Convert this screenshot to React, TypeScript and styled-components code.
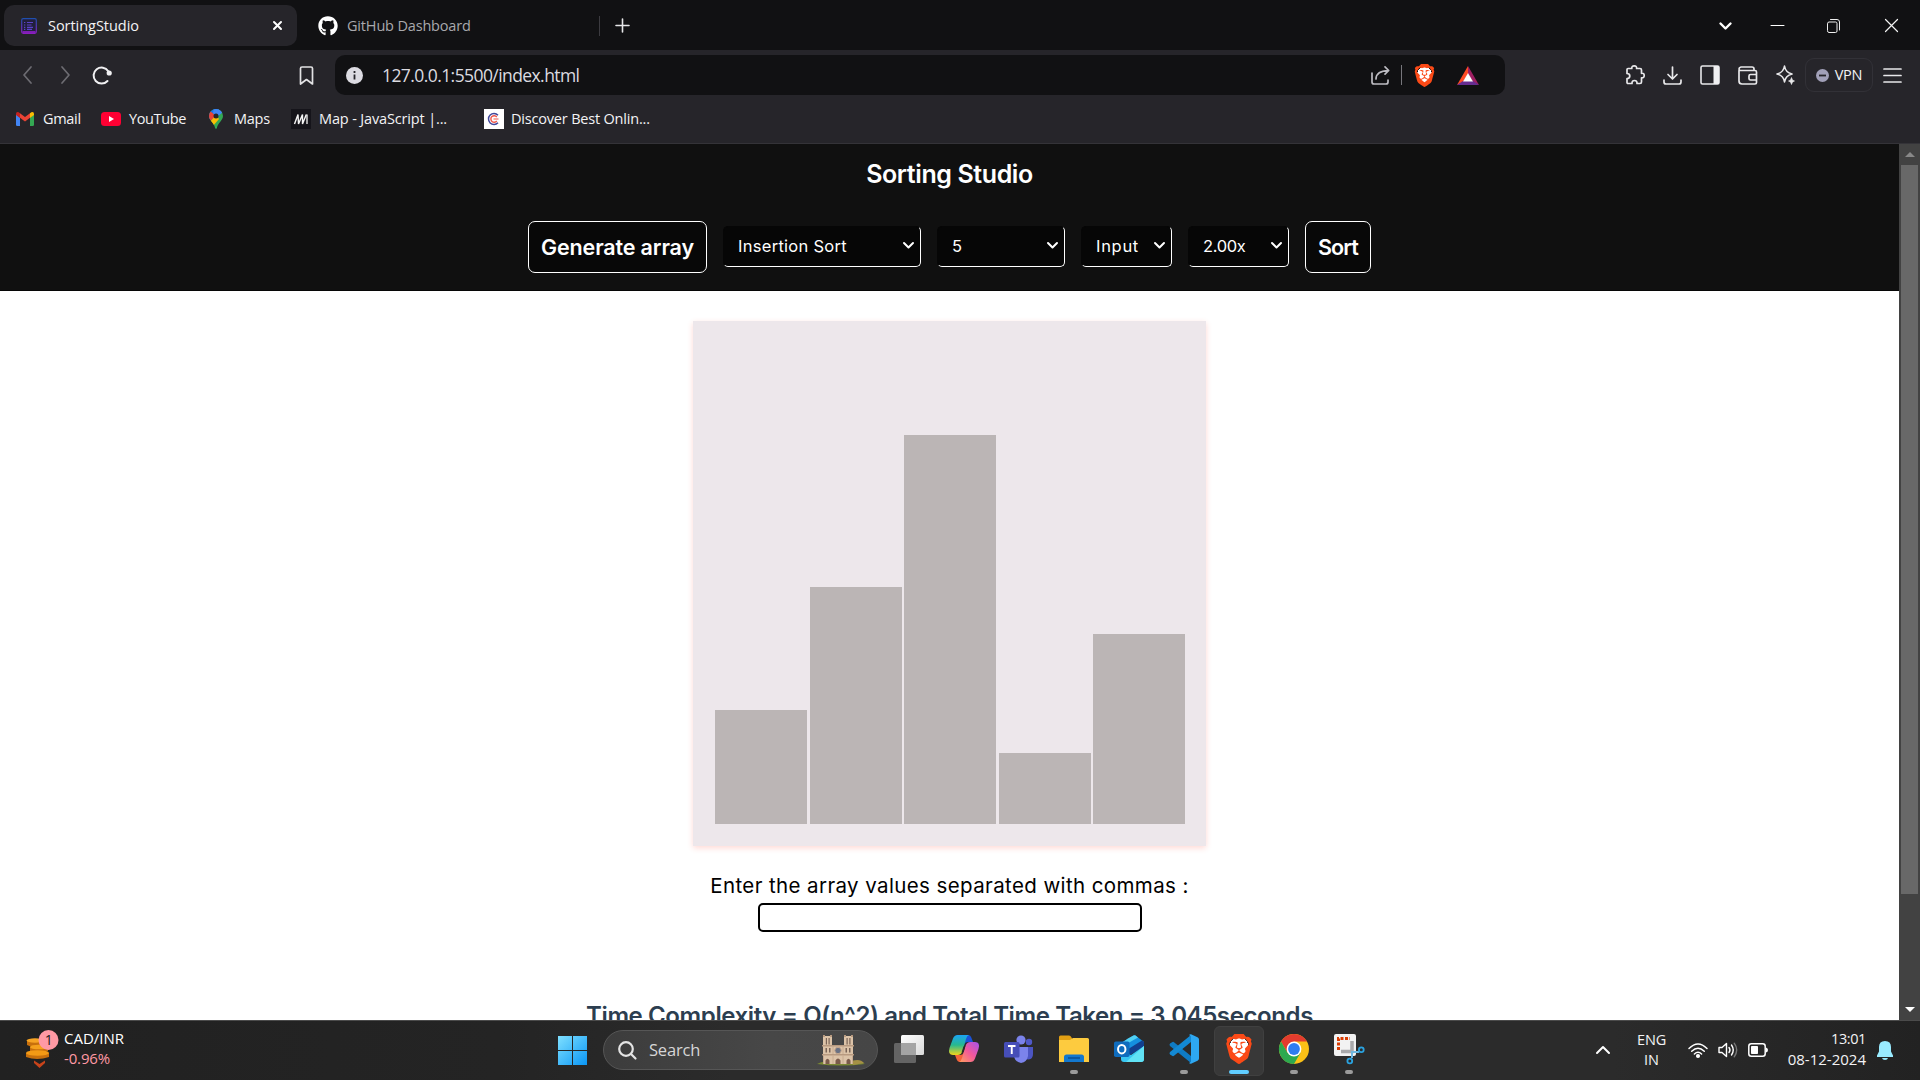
import React from 'react';
import styled, { createGlobalStyle } from 'styled-components';
import { FaGithub } from 'react-icons/fa';
import { SiBrave } from 'react-icons/si';

const Global = createGlobalStyle`
  * { box-sizing: border-box; }
  body { margin: 0; width: 1920px; height: 1080px; overflow: hidden; background: #111113; }
  svg { display: block; flex: none; overflow: visible; }
`;

const UI = `"Open Sans", "Noto Sans", sans-serif`;
const GEO = `Inter, "Open Sans", sans-serif`;

const Screen = styled.div`
  width: 1920px;
  height: 1080px;
  display: flex;
  flex-direction: column;
  font-family: ${UI};
`;

const Label = styled.span<{ $size?: number; $track?: number; $color?: string }>`
  font-size: ${(p) => p.$size ?? 14.5}px;
  letter-spacing: ${(p) => p.$track ?? 0}px;
  color: ${(p) => p.$color ?? '#f3f3f5'};
  line-height: 20px;
  white-space: nowrap;
`;

/* ---------- browser chrome ---------- */
const TabStrip = styled.div`
  height: 50px;
  background: #111113;
  display: flex;
  align-items: center;
  padding: 1px 22px 0 4px;
`;
const Tab = styled.div<{ $active?: boolean }>`
  width: ${(p) => (p.$active ? 293 : 302)}px;
  height: 41px;
  border-radius: 10px;
  background: ${(p) => (p.$active ? '#26252a' : 'transparent')};
  display: flex;
  align-items: center;
  gap: ${(p) => (p.$active ? 11 : 9)}px;
  padding: 0 ${(p) => (p.$active ? 15 : 0)}px 0 ${(p) => (p.$active ? 17 : 21)}px;
`;
const Spacer = styled.div`
  flex: 1;
`;
const Divider = styled.div<{ $color?: string }>`
  width: 1px;
  height: 20px;
  background: ${(p) => p.$color ?? '#3c3b40'};
`;
const NewTab = styled.div`
  margin-left: 16px;
`;
const WindowButtons = styled.div`
  display: grid;
  grid-template-columns: 52px 56px 58px 13px;
  align-items: center;
`;

const Toolbar = styled.div`
  height: 50px;
  background: #26252a;
  display: flex;
  align-items: center;
  padding: 0 18px 0 20px;
`;
const NavGroup = styled.div`
  width: 315px;
  display: flex;
  align-items: center;
  gap: 22px;
  padding-right: 20px;
`;
const AddressBar = styled.div`
  width: 1170px;
  height: 40px;
  border-radius: 10px;
  background: #111113;
  display: flex;
  align-items: center;
  padding: 0 26px 0 11px;
`;
const Url = styled(Label)`
  margin-left: 19px;
`;
const AddressActions = styled.div`
  display: flex;
  align-items: center;
  gap: 11px;
`;
const Bat = styled.div`
  margin-left: 10px;
`;
const BraveShield = styled.div<{ $w: number; $h: number }>`
  width: ${(p) => p.$w}px;
  height: ${(p) => p.$h}px;
  display: grid;
  place-items: center;
  color: #fb4a17;
  background: radial-gradient(ellipse 32% 36% at 50% 46%, #fff 98%, transparent);
`;
const ToolActions = styled.div`
  display: flex;
  align-items: center;
  gap: 18px;
`;
const VpnPill = styled.div`
  width: 68px;
  height: 34px;
  margin: 0 -8px 0 -8px;
  border: 1px solid #323137;
  border-radius: 9px;
  display: flex;
  align-items: center;
  justify-content: center;
  gap: 6px;
`;
const Bookmarks = styled.div`
  height: 44px;
  background: #26252a;
  border-bottom: 1px solid #343338;
  display: flex;
  align-items: center;
  padding: 0 0 6px 16px;
`;
const Bookmark = styled.div<{ $w: number; $gap: number }>`
  width: ${(p) => p.$w}px;
  display: flex;
  align-items: center;
  gap: ${(p) => p.$gap}px;
`;

/* ---------- page ---------- */
const Viewport = styled.div`
  height: 876px;
  display: flex;
  background: #fff;
`;
const Page = styled.main`
  flex: 1;
  height: 876px;
  overflow: hidden;
  display: flex;
  flex-direction: column;
  align-items: center;
  font-family: ${GEO};
`;
const Header = styled.header`
  width: 100%;
  height: 147px;
  flex: none;
  background: #101010;
  border-bottom: 1px solid #060606;
  display: flex;
  flex-direction: column;
  align-items: center;
  padding-top: 11px;
`;
const Title = styled.h1`
  margin: 0 0 28px;
  font-size: 25px;
  line-height: 38px;
  font-weight: 600;
  letter-spacing: -0.4px;
  color: #fff;
`;
const Controls = styled.div`
  display: flex;
  align-items: center;
  gap: 16px;
`;
const ActionButton = styled.button<{ $w: number; $track: number }>`
  width: ${(p) => p.$w}px;
  height: 52px;
  padding: 0;
  border: 1px solid #fff;
  border-radius: 7px;
  background: #080808;
  color: #fff;
  font: 600 21.5px ${GEO};
  letter-spacing: ${(p) => p.$track}px;
  white-space: nowrap;
`;
const Picker = styled.div<{ $w: number; $track: number }>`
  width: ${(p) => p.$w}px;
  height: 41px;
  margin-bottom: 1px;
  padding: 0 6px 2px 14px;
  border: 1px solid;
  border-color: #060606 #fff #fff #060606;
  border-radius: 5px;
  background: #060606;
  color: #fff;
  display: flex;
  align-items: center;
  justify-content: space-between;
  font-size: 16.5px;
  letter-spacing: ${(p) => p.$track}px;
`;
const Chart = styled.section`
  width: 513px;
  height: 525px;
  flex: none;
  margin-top: 30px;
  padding: 22px 21px 22px 22px;
  background: #ede7eb;
  box-shadow: 0 2px 6px rgba(255, 60, 40, 0.2);
  display: flex;
  align-items: flex-end;
  justify-content: space-between;
`;
const Bar = styled.div`
  width: 92px;
  background: #bbb5b5;
`;
const Prompt = styled.label`
  margin-top: 25px;
  font-size: 20.5px;
  line-height: 30px;
  letter-spacing: 0.39px;
  color: #000;
`;
const ArrayInput = styled.input`
  width: 384px;
  height: 29px;
  flex: none;
  margin-top: 2px;
  border: 2px solid #000;
  border-radius: 5px;
  outline: none;
  background: #fff;
`;
const Result = styled.h2`
  margin: 66px 0 0;
  font-size: 24px;
  line-height: 36px;
  font-weight: 600;
  letter-spacing: -0.39px;
  white-space: nowrap;
  color: #2c3e50;
`;
const ScrollTrack = styled.div`
  width: 21px;
  background: #424242;
  display: flex;
  flex-direction: column;
  align-items: center;
`;
const ScrollArrow = styled.div`
  width: 21px;
  height: 21px;
  display: grid;
  place-items: center;
`;
const ScrollThumb = styled.div`
  width: 17px;
  height: 729px;
  background: #686868;
`;

/* ---------- taskbar ---------- */
const Taskbar = styled.footer`
  height: 60px;
  border-top: 1px solid #4b4b4b;
  background: linear-gradient(90deg, #212121, #242424 26%, #2b2b2b 38%, #2b2b2b 84%, #222 100%);
  display: flex;
  align-items: center;
`;
const Widget = styled.div`
  width: 545px;
  display: flex;
  align-items: center;
  gap: 5px;
  padding: 0 0 3px 26px;
`;
const Stack = styled.div<{ $align: string }>`
  display: flex;
  flex-direction: column;
  align-items: ${(p) => p.$align};
  padding-bottom: 2px;
`;
const StartButton = styled.div`
  width: 58px;
  padding-left: 13px;
`;
const SearchBox = styled.div`
  width: 275px;
  height: 40px;
  margin: 0 3.5px 1px 0;
  border: 1px solid #565656;
  border-radius: 20px;
  background: linear-gradient(90deg, #3c3c3c, #474747 60%, #464646);
  display: flex;
  align-items: center;
  gap: 12px;
  padding: 0 12px 0 14px;
`;
const AppCell = styled.div<{ $active?: boolean }>`
  width: 50px;
  height: 50px;
  margin: 0 2.5px;
  border: 1px solid ${(p) => (p.$active ? '#404040' : 'transparent')};
  border-radius: 6px;
  background: ${(p) => (p.$active ? '#383838' : 'transparent')};
  display: grid;
  grid-template-rows: 1fr 5px;
  justify-items: center;
  align-items: center;
`;
const AppArt = styled.div`
  height: 30px;
  display: grid;
  place-items: center;
  padding-top: 1px;
`;
const Indicator = styled.div<{ $kind: 'none' | 'open' | 'active' }>`
  width: ${(p) => (p.$kind === 'active' ? 20 : 8)}px;
  height: 4px;
  border-radius: 2px;
  background: ${(p) => ({ none: 'transparent', open: '#9b9b9b', active: '#60cdff' })[p.$kind]};
`;
const Tray = styled.div`
  margin-left: auto;
  padding: 0 27px 1px 0;
  display: flex;
  align-items: center;
`;
const Language = styled(Stack)`
  margin: 0 22px 0 27px;
  padding-bottom: 0;
`;
const Status = styled.div`
  display: flex;
  gap: 10px;
  align-items: center;
`;
const Clock = styled(Stack)`
  width: 98px;
  margin-right: 11px;
`;

const Line = ({ w, h, vb, d, color = '#e8e8ea', sw = 1.7 }: { w: number; h: number; vb?: string; d: string; color?: string; sw?: number }) => (
  <svg width={w} height={h} viewBox={vb ?? `0 0 ${w} ${h}`} fill="none" stroke={color} strokeWidth={sw} strokeLinecap="round" strokeLinejoin="round">
    <path d={d} />
  </svg>
);

const Lion = ({ w, h }: { w: number; h: number }) => (
  <BraveShield $w={w} $h={h}>
    <SiBrave size={h} />
  </BraveShield>
);

const PageFavicon = () => (
  <svg width="16" height="16" viewBox="0 0 16 16">
    <defs>
      <linearGradient id="fav" x1="0" y1="0" x2="0" y2="1">
        <stop offset="0" stopColor="#1f4fae" />
        <stop offset="1" stopColor="#8a1fc0" />
      </linearGradient>
    </defs>
    <rect x=".7" y=".7" width="14.6" height="14.6" rx="1.5" fill="#211f3c" stroke="url(#fav)" strokeWidth="1.2" />
    <path d="M1.500 14h13" stroke="#8a1fc0" strokeWidth="1.800" />
    <path d="M3 4.500h1.300M6 4.500h6M3 7h1.300M6 7h4.500M3 9.300h1.300M6 9.300h6M3 11.400h1.300M6 11.400h5" stroke="#5b43c8" strokeWidth="1.200" />
  </svg>
);

const Gmail = () => (
  <svg width="18" height="14" viewBox="0 0 18 14">
    <path d="M0 2.2V12.7Q0 14 1.3 14H4V5.5z" fill="#4285f4" />
    <path d="M18 2.2V12.7Q18 14 16.700 14H14V5.500z" fill="#34a853" />
    <path d="M4 5.800V1.300L9 5L14 1.300V5.800L9 9.600z" fill="#ea4335" />
    <path d="M0 2Q0 0 1.600 0 2.500 0 4 1.200V5.900L0 3z" fill="#c5221f" />
    <path d="M18 2Q18 0 16.400 0 15.500 0 14 1.200V5.900L18 3z" fill="#fbbc04" />
  </svg>
);

const Youtube = () => (
  <svg width="20" height="14" viewBox="0 0 20 14">
    <rect width="20" height="14" rx="3.5" fill="#ff0033" />
    <path d="M8 4v6l5-3z" fill="#fff" />
  </svg>
);

const MapsPin = () => (
  <svg width="14" height="20" viewBox="0 0 14 20">
    <defs>
      <clipPath id="pin"><path d="M7 0a7 7 0 0 1 7 7c0 4.500-5 6.500-6.200 12.200q-.8 1.200-1.600 0C5 13.500 0 11.500 0 7a7 7 0 0 1 7-7z" /></clipPath>
    </defs>
    <g clipPath="url(#pin)">
      <rect width="14" height="20" fill="#34a853" />
      <path d="M0 12 14-4 V-2H0z" fill="#1a73e8" />
      <path d="M0 1l7 6-7 6z" fill="#ea4335" />
      <path d="M0 14 7 6l3 4-6 7z" fill="#fbbc04" />
      <path d="M5-1h9v4L8 8 4 4z" fill="#4285f4" />
    </g>
    <circle cx="7" cy="7" r="2.5" fill="#26252a" />
  </svg>
);

const Mdn = () => (
  <svg width="20" height="20" viewBox="0 0 20 20">
    <rect width="20" height="20" fill="#15141a" />
    <path d="M3.500 15 7 5.500 7.500 15 11.500 5.500 11.500 15 15.300 5.500" fill="none" stroke="#f5f5f5" strokeWidth="1.400" strokeLinejoin="bevel" />
    <path d="M16 5.500v9.500" stroke="#f5f5f5" strokeWidth="1.300" />
  </svg>
);

const CourseIcon = () => (
  <svg width="20" height="20" viewBox="0 0 20 20" fill="none">
    <rect width="20" height="20" fill="#fff" />
    <path d="M14 6.200A5.500 5.500 0 1 0 14 13.800" stroke="#41479b" strokeWidth="1.500" />
    <path d="M12.800 8A3.300 3.300 0 1 0 12.800 12" stroke="#f0564a" strokeWidth="1.400" />
    <path d="M9.500 10h5" stroke="#f0564a" />
  </svg>
);

const Coins = () => (
  <svg width="33" height="38" viewBox="0 0 33 38">
    <g fill="#c8700c">
      <path d="M1 11v4q7 4 16 0v-4z" />
      <path d="M4 17v4q8 4 18 0v-4z" />
      <path d="M0 23v4q11 4 23 0v-4z" />
    </g>
    <ellipse cx="9" cy="10.500" rx="8.500" ry="2.200" fill="#f7a423" />
    <ellipse cx="13" cy="17" rx="9" ry="2.300" fill="#f5a01c" />
    <ellipse cx="11.500" cy="23" rx="11.500" ry="2.700" fill="#f39a15" />
    <path d="M8 30.500l5.500 3.500L19 30.500v2.500l-5.500 5L8 33z" fill="#c8431a" />
    <circle cx="22.500" cy="10" r="10" fill="#ff99a4" />
    <text x="22.800" y="15" fontSize="14" textAnchor="middle" fill="#1b1b1b" fontFamily="Open Sans">1</text>
  </svg>
);

const WindowsLogo = () => (
  <svg width="29" height="29" viewBox="0 0 29 29">
    <defs>
      <linearGradient id="win" x1="0" y1="0" x2="29" y2="29" gradientUnits="userSpaceOnUse">
        <stop offset="0" stopColor="#7fe0ff" />
        <stop offset="1" stopColor="#0a96f5" />
      </linearGradient>
    </defs>
    <path d="M0 0h14v14H0zM15 0h14v14H15zM0 15h14v14H0zM15 15h14v14H15z" fill="url(#win)" />
  </svg>
);

const Cathedral = () => (
  <svg width="48" height="32" viewBox="0 0 48 32">
    <path d="M0 30Q8 26 24 27 40 25 48 30 24 33 0 30z" fill="#7b8a34" />
    <path d="M35 27q8-3 12 2l-11 2z" fill="#a59045" />
    <path d="M6 2h9v9h12V2h9v28H6z" fill="#dcc3a8" />
    <path d="M6 1h2v2H6zM13 1h2v2h-2zM27 1h2v2h-2zM34 1h2v2h-2zM5 11h32v1.500H5zM5 20h32v1.600H5z" fill="#b89a80" />
    <path d="M8.800 4h1.200v6.500H8.800zM11.500 4h1.200v6.500h-1.200zM29.500 4h1.200v6.500h-1.200zM32.300 4h1.200v6.500h-1.200zM8.500 14h1.500v4.500H8.500zM12 14h1.500v4.500h-1.500zM28.500 14h1.500v4.500h-1.500zM32 14h1.500v4.500h-1.500z" fill="#7a6457" />
    <circle cx="21" cy="16.500" r="3.200" fill="#6a7183" stroke="#c3a68e" />
    <path d="M8.500 30v-3.500q2-3.500 4 0V30zM18.500 30v-3.500q2.500-4 5 0V30zM29.500 30v-3.500q2-3.500 4 0V30z" fill="#7a5a4a" />
    <path d="M16 12v8M26 12v8M6.500 22v8M16 22v8M26 22v8M35.500 22v8" stroke="#c4a58c" strokeWidth=".8" />
  </svg>
);

const TaskView = () => (
  <svg width="30" height="28" viewBox="0 0 30 28">
    <defs>
      <linearGradient id="tv" x1="0" y1="0" x2="1" y2="1"><stop offset="0" stopColor="#fff" /><stop offset="1" stopColor="#d9d9d9" /></linearGradient>
    </defs>
    <rect y="8" width="22" height="20" rx="1.500" fill="#646464" />
    <rect x="7" width="23" height="20" rx="1.500" fill="url(#tv)" />
    <path d="M7 8h15v12H7z" fill="#a4a4a4" />
  </svg>
);

const Copilot = () => (
  <svg width="30" height="27" viewBox="0 0 30 27">
    <defs>
      <linearGradient id="cpa" x1="0" y1="0" x2="0" y2="1"><stop offset="0" stopColor="#1ba4f5" /><stop offset=".5" stopColor="#27b98f" /><stop offset="1" stopColor="#f1d51b" /></linearGradient>
      <linearGradient id="cpb" x1="1" y1="0" x2="0" y2="1"><stop offset="0" stopColor="#a553ee" /><stop offset=".5" stopColor="#f3589a" /><stop offset="1" stopColor="#ffa05c" /></linearGradient>
    </defs>
    <path d="M14 0h5q2.500 0 3.500 3L24 7h-5q-3 0-4 3z" fill="#1b52d8" />
    <path d="M16 27h-5q-2.500 0-3.500-3L6 20h5q3 0 4-3z" fill="#f4623a" />
    <path d="M8.500 0H20q-2 .5-3 4l-3.500 12q-1.200 4-5 4H4q-5.500 0-3.500-7L4 3.500Q5.300 0 8.500 0z" fill="url(#cpa)" />
    <path d="M21.500 27H10q2-.5 3-4l3.500-12q1.200-4 5-4H26q5.500 0 3.500 7L26 23.500Q24.700 27 21.500 27z" fill="url(#cpb)" />
    <path d="M14.500 11.500l2-1-2 6.500-2 .5z" fill="#2a2a2a" />
  </svg>
);

const Teams = () => (
  <svg width="30" height="28" viewBox="0 0 30 28">
    <circle cx="25" cy="7" r="3.200" fill="#5059c9" />
    <path d="M20 12h9v7q0 5-4.500 5.500-4 0-4.500-4z" fill="#4c55c2" />
    <circle cx="17" cy="5" r="4.600" fill="#7b83eb" />
    <path d="M10 12h14v9q-1 6-7 7-6-1-7-7z" fill="#7b83eb" />
    <rect y="7" width="15.500" height="15.500" rx="1.500" fill="#464eb8" />
    <path d="M4 11h7.500M7.750 11v8" stroke="#fff" strokeWidth="1.900" />
  </svg>
);

const Explorer = () => (
  <svg width="30" height="28" viewBox="0 0 30 28">
    <path d="M0 2q0-1.500 1.500-1.500H10q1.500 0 2.500 2L14 5H0z" fill="#e2a013" />
    <path d="M0 5h11l3-2h14.500Q30 3 30 4.500V27H0z" fill="#fdcb3f" />
    <path d="M5 27v-5q0-2.500 2.500-2.500h15Q25 19.500 25 22v5z" fill="#1378cf" />
    <path d="M9 23h12" stroke="#0b4f94" strokeWidth="1.500" />
  </svg>
);

const Outlook = () => (
  <svg width="30" height="27" viewBox="0 0 30 27">
    <path d="M5 9 19.500.5Q20.500 0 21.500.5L30 7v4L15 19 5 14z" fill="#1490df" />
    <path d="M14 3.500 19.500.5Q20.500 0 21.500.5L24 2.400 9 11V7z" fill="#50d0f2" />
    <path d="M28 5.500 30 7v5L14 21l-3-5z" fill="#123f8e" />
    <path d="M7 17l10 3L30 11v13q0 3-3 3H10q-3 0-3-3z" fill="#39c7f3" />
    <path d="M30 11 12 27h15q3 0 3-3z" fill="#61e2f5" />
    <rect y="6.500" width="15.500" height="15.500" rx="1.800" fill="#0f6cbd" />
    <ellipse cx="7.750" cy="14.200" rx="3.700" ry="4.200" fill="none" stroke="#fff" strokeWidth="2" />
  </svg>
);

const Code = () => (
  <svg width="30" height="30" viewBox="0 0 30 30">
    <path d="M1 9.500 3.500 8Q4.300 7.600 5 8.200L22 22v7L1 12q-1-1.300 0-2.500z" fill="#0f7bc4" />
    <path d="M1 20.500 3.500 22q.8.4 1.500-.2L22 8V1L1 18q-1 1.300 0 2.500z" fill="#1389d4" />
    <path d="M22 .3 28.500 3.300Q30 4 30 5.500v19q0 1.500-1.500 2.200L22 29.700q-1 .3-2-.7l2-1.200V2.200L20 1q1-1 2-.7z" fill="#2ea8f2" />
  </svg>
);

const Chrome = () => (
  <svg width="30" height="30" viewBox="-15 -15 30 30">
    <circle r="15" fill="#fbc116" />
    <path d="M-13 -7.500A15 15 0 0 1 13 -7.500H0L-6.500 3.750z" fill="#e33b2e" />
    <path d="M-13 -7.500A15 15 0 0 0 0 15L6.500 3.750-6.500 3.750z" fill="#2da94f" />
    <circle r="7.400" fill="#fff" />
    <circle r="5.900" fill="#2f7df0" />
  </svg>
);

const Snip = () => (
  <svg width="30" height="30" viewBox="0 0 30 30" fill="none">
    <rect width="22" height="22" rx="2" fill="#f2f2f2" />
    <path d="M4.500 16V4.500H16" stroke="#d83b01" strokeWidth="3" strokeDasharray="3 1.500" />
    <path d="M7 17.500H18V7" stroke="#a9a9ab" strokeWidth="3.500" />
    <path d="M18 18.500V24M17 18h8" stroke="#6fb7df" strokeWidth="2" />
    <circle cx="15.800" cy="27" r="2.400" stroke="#2aa3e0" strokeWidth="1.800" />
    <circle cx="27.300" cy="15.800" r="2.400" stroke="#2aa3e0" strokeWidth="1.800" />
  </svg>
);

const Chevron = () => <Line w={11} h={7} d="M1 1l4.500 4.500L10 1" color="#fff" sw={2} />;

const bookmarks = [
  { icon: <Gmail />, text: 'Gmail', w: 85, gap: 9, track: -0.3 },
  { icon: <Youtube />, text: 'YouTube', w: 108, gap: 8, track: -0.38 },
  { icon: <MapsPin />, text: 'Maps', w: 82, gap: 11, track: -0.25 },
  { icon: <Mdn />, text: 'Map - JavaScript |...', w: 193, gap: 8, track: -0.15 },
  { icon: <CourseIcon />, text: 'Discover Best Onlin...', w: 170, gap: 7, track: -0.19 },
];

const pickers = [
  { text: 'Insertion Sort', w: 198, track: 0.28 },
  { text: '5', w: 128, track: 0 },
  { text: 'Input', w: 91, track: 0.7 },
  { text: '2.00x', w: 101, track: -0.35 },
];

const values = [24, 50, 82, 15, 40];
const UNIT = 4.745;

const apps: { art: React.ReactNode; state: 'none' | 'open' | 'active' }[] = [
  { art: <TaskView />, state: 'none' },
  { art: <Copilot />, state: 'none' },
  { art: <Teams />, state: 'none' },
  { art: <Explorer />, state: 'open' },
  { art: <Outlook />, state: 'none' },
  { art: <Code />, state: 'open' },
  { art: <Lion w={30} h={30} />, state: 'active' },
  { art: <Chrome />, state: 'open' },
  { art: <Snip />, state: 'open' },
];

export default function App() {
  return (
    <Screen>
      <Global />
      <TabStrip>
        <Tab $active>
          <PageFavicon />
          <Label $track={-0.04}>SortingStudio</Label>
          <Spacer />
          <Line w={9} h={9} d="M1 1l7 7M8 1l-7 7" color="#fff" sw={2} />
        </Tab>
        <Tab>
          <FaGithub size={20} color="#fff" />
          <Label $track={-0.17} $color="#a9a9ad">GitHub Dashboard</Label>
        </Tab>
        <Divider />
        <NewTab>
          <Line w={13} h={13} d="M6.500 0v13M0 6.500h13" color="#e6e6e8" sw={1.6} />
        </NewTab>
        <Spacer />
        <WindowButtons>
          <Line w={13} h={8} d="M1.500 1.500l5 5 5-5" color="#fff" sw={2.4} />
          <Line w={13} h={2} d="M0 .5h13" color="#fff" sw={1} />
          <Line w={13} h={14} d="M.5 4.500q0-1.500 1.500-1.500h6.500q1.500 0 1.500 1.500v7.500q0 1.500-1.500 1.500H2q-1.500 0-1.500-1.500zM3.500 .5H10q2.500 0 2.500 2.500v8" color="#f0f0f0" sw={1} />
          <Line w={13} h={13} d="M.5.5l12 12M12.500.5l-12 12" color="#f4f4f4" sw={1.2} />
        </WindowButtons>
      </TabStrip>

      <Toolbar>
        <NavGroup>
          <Line w={14} h={18} d="M11 1L4 9l7 8" color="#6d6c72" />
          <Line w={14} h={18} d="M6 1l7 8-7 8" color="#6d6c72" />
          <svg width="20" height="19" viewBox="0 0 20 19">
            <path d="M15.500 15A8 8 0 1 1 16.300 5.200" fill="none" stroke="#f0f0f2" strokeWidth="2" strokeLinecap="round" />
            <circle cx="17.200" cy="7" r="2.600" fill="#f0f0f2" />
          </svg>
          <Spacer />
          <Line w={16} h={19} d="M1.500 2.500q0-1.500 1.500-1.500h9q1.500 0 1.500 1.500V18l-6-4.500-6 4.500z" color="#e2e2e4" />
        </NavGroup>
        <AddressBar>
          <svg width="17" height="17" viewBox="0 0 17 17">
            <circle cx="8.500" cy="8.500" r="8.500" fill="#dcdbe2" />
            <path d="M8.500 7.500v5M8.500 4v2" stroke="#26252a" strokeWidth="1.800" />
          </svg>
          <Url $size={17.5} $track={-0.58} $color="#dcdbe0">127.0.0.1:5500/index.html</Url>
          <Spacer />
          <AddressActions>
            <Line w={19} h={19} d="M1 7v9q0 2 2 2h12q2 0 2-2v-2M5 13q0-8 12.500-8.500M14 .800l3.700 3.700L14 8.200" color="#bdbcc2" />
            <Divider $color="#77767c" />
            <Lion w={23} h={23} />
            <Bat>
              <svg width="22" height="19" viewBox="0 0 22 19">
                <path d="M11 0v8l-5 8-6 3z" fill="#ff4a24" />
                <path d="M11 0l11 19-6-3-5-8z" fill="#9e1f63" />
                <path d="M0 19l6-4h10l6 4z" fill="#662d91" />
                <path d="M11 7l5 8.500H6z" fill="#fff" />
              </svg>
            </Bat>
          </AddressActions>
        </AddressBar>
        <Spacer />
        <ToolActions>
          <Line w={20} h={20} d="M2 4.500q0-1 1-1h3.800q-.3-2.700 2.400-2.700t2.400 2.700H15q1.500 0 1.500 1.500v3.300q2.700-.3 2.700 2.200t-2.700 2.300V17q0 1.500-1.500 1.500h-3q.2-3-2.500-3T7 18.500H3q-1 0-1-1v-4q2.800 0 2.800-2.500T2 8.500z" />
          <Line w={19} h={19} d="M9.500 1v11.500M5 8.500l4.500 4.500L14 8.500M1 14v2q0 2 2 2h13q2 0 2-2v-2" />
          <svg width="20" height="20" viewBox="0 0 20 20">
            <rect x="1" y="1" width="18" height="18" rx="1.500" fill="none" stroke="#e8e8ea" strokeWidth="1.600" />
            <path d="M13.500 1H19v18h-5.500z" fill="#f0f0f2" />
          </svg>
          <Line w={20} h={19} d="M1 4.500V15q0 3 3 3h13q1.500 0 1.500-1.500V6q0-1.500-1.500-1.500H2.500Q1 4.500 1 3t2-2h11q2 0 2 2v1.500M18.500 8.500h-6q-1.500 0-1.500 1.500v2.500q0 1.500 1.500 1.500h6" />
          <svg width="19" height="20" viewBox="0 0 19 20" fill="none" stroke="#e8e8ea" strokeWidth="1.600" strokeLinejoin="round">
            <path d="M8.500 1q1 6.500 7.500 8-6.500 1.500-7.500 8Q7.500 10.500 1 9 7.500 7.500 8.500 1z" />
            <path d="M15.500 12.500q.4 3 3 3.500-2.600.5-3 3.500-.4-3-3-3.500 2.600-.5 3-3.500z" fill="#e8e8ea" strokeWidth=".6" />
          </svg>
          <VpnPill>
            <svg width="13" height="13" viewBox="0 0 13 13">
              <circle cx="6.500" cy="6.500" r="6.500" fill="#a1a0b8" />
              <path d="M3 6.500h7" stroke="#26252a" strokeWidth="1.800" />
            </svg>
            <Label $track={-0.2}>VPN</Label>
          </VpnPill>
          <Line w={19} h={15} d="M1 1h17M1 7.500h17M1 14h17" />
        </ToolActions>
      </Toolbar>
      <Bookmarks>
        {bookmarks.map((b) => (
          <Bookmark key={b.text} $w={b.w} $gap={b.gap}>
            {b.icon}
            <Label $track={b.track}>{b.text}</Label>
          </Bookmark>
        ))}
      </Bookmarks>

      <Viewport>
        <Page>
          <Header>
            <Title>Sorting Studio</Title>
            <Controls>
              <ActionButton $w={179} $track={-0.15}>Generate array</ActionButton>
              {pickers.map((p) => (
                <Picker key={p.text} $w={p.w} $track={p.track}>
                  {p.text}
                  <Chevron />
                </Picker>
              ))}
              <ActionButton $w={66} $track={-0.9}>Sort</ActionButton>
            </Controls>
          </Header>
          <Chart>
            {values.map((v, i) => (
              <Bar key={i} style={{ height: v * UNIT }} />
            ))}
          </Chart>
          <Prompt htmlFor="values">Enter the array values separated with commas :</Prompt>
          <ArrayInput id="values" />
          <Result>Time Complexity = O(n^2) and Total Time Taken = 3.045seconds</Result>
        </Page>
        <ScrollTrack>
          <ScrollArrow>
            <svg width="10" height="5" viewBox="0 0 10 5"><path d="M5 0l5 5H0z" fill="#888" /></svg>
          </ScrollArrow>
          <ScrollThumb />
          <Spacer />
          <ScrollArrow>
            <svg width="10" height="5" viewBox="0 0 10 5"><path d="M5 5l5-5H0z" fill="#fff" /></svg>
          </ScrollArrow>
        </ScrollTrack>
      </Viewport>

      <Taskbar>
        <Widget>
          <Coins />
          <Stack $align="flex-start">
            <Label $size={15} $color="#fff">CAD/INR</Label>
            <Label $size={15} $track={-0.15} $color="#ff99a4">-0.96%</Label>
          </Stack>
        </Widget>
        <StartButton><WindowsLogo /></StartButton>
        <SearchBox>
          <Line w={19} h={19} d="M13.500 13.500l4 4M8 1.200a6.800 6.800 0 1 0 0 13.600 6.800 6.800 0 0 0 0-13.600" color="#e4e4e4" sw={2.2} />
          <Label $size={16.5} $track={-0.2} $color="#d6d6d6">Search</Label>
          <Spacer />
          <Cathedral />
        </SearchBox>
        {apps.map((a, i) => (
          <AppCell key={i} $active={a.state === 'active'}>
            <AppArt>{a.art}</AppArt>
            <Indicator $kind={a.state} />
          </AppCell>
        ))}
        <Tray>
          <Line w={14} h={8} d="M1 7l6-6 6 6" color="#fff" sw={2} />
          <Language $align="center">
            <Label $size={14.5} $track={-0.2}>ENG</Label>
            <Label $size={14.5}>IN</Label>
          </Language>
          <Status>
            <svg width="20" height="15" viewBox="0 0 20 15" fill="none" stroke="#fff" strokeWidth="1.500" strokeLinecap="round">
              <path d="M1 5.500q9-9 18 0M3.700 8.300q6.300-6.200 12.600 0M6.400 11q3.600-3.500 7.200 0" />
              <circle cx="10" cy="13" r="1.300" fill="#fff" />
            </svg>
            <svg width="20" height="16" viewBox="0 0 20 16" fill="none" stroke="#fff" strokeWidth="1.400" strokeLinecap="round" strokeLinejoin="round">
              <path d="M1 5.500h3L8.500 1.500v13L4 10.500H1zM11 5.500q2 2.500 0 5M13.500 3q3.500 5 0 10" />
              <path d="M16.200 1.200q5 6.800 0 13.600" stroke="#777" />
            </svg>
            <svg width="20" height="14" viewBox="0 0 20 14" fill="none">
              <rect x=".8" y=".8" width="16.400" height="12.400" rx="2.500" stroke="#fff" strokeWidth="1.500" />
              <rect x="3" y="3" width="7" height="8" rx=".8" fill="#fff" />
              <path d="M18 4.500q2 .5 2 2.500t-2 2.500z" fill="#fff" />
            </svg>
          </Status>
          <Clock $align="flex-end">
            <Label $size={14.5} $track={-0.4}>13:01</Label>
            <Label $size={15}>08-12-2024</Label>
          </Clock>
          <svg width="16" height="19" viewBox="0 0 16 19">
            <path d="M8 0q6 0 6 6v4.500l2 4V16H0v-1.500l2-4V6q0-6 6-6z" fill="#99ebff" />
            <path d="M5 17h6q-.5 2-3 2t-3-2z" fill="#99ebff" />
          </svg>
        </Tray>
      </Taskbar>
    </Screen>
  );
}
